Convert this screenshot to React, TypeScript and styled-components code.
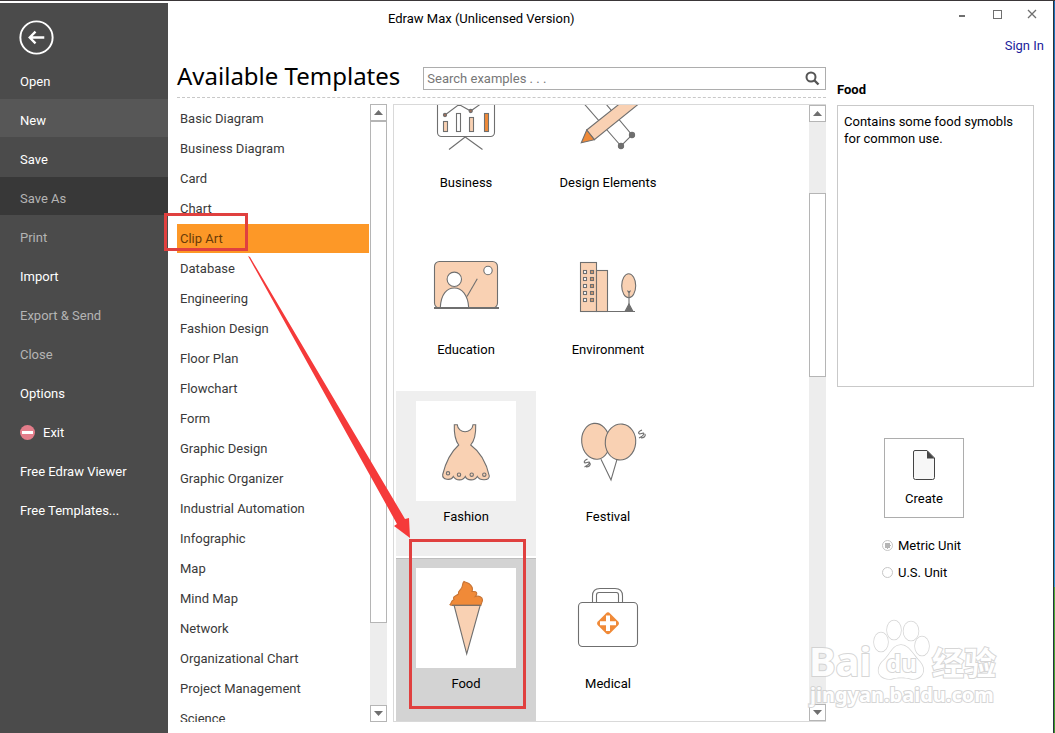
import React from "react";
import styled, { createGlobalStyle } from "styled-components";

const INK = "#6f6f6f";
const PEACH = "#f9d1b3";
const ORANGE = "#f08a38";
const MARK = "#e0403f";

const GlobalStyle = createGlobalStyle`
  *, *::before, *::after { box-sizing: border-box; }
  body { margin: 0; background: #fff; }
  body, button, input { font-family: Roboto, "Noto Sans CJK SC", sans-serif; font-size: 13px; line-height: 17px; }
  button { padding: 0; border: 0; background: none; color: inherit; text-align: inherit; cursor: pointer; }
  ul, h1, h2, p { margin: 0; padding: 0; list-style: none; }
  svg { display: block; }
`;

const Page = styled.div`
  position: relative;
  display: flex;
  height: 100vh;
  min-height: 560px;
  overflow: hidden;
  border-top: 1px solid #3a3638;
`;

const Sidebar = styled.nav`
  width: 168px;
  flex: none;
  margin-top: 2px;
  background: #4b4b4b;
`;

const BackButton = styled.button`
  display: block;
  margin: 17px 0 5px 19px;
`;

const NavItem = styled.button<{ $tone?: "active" | "dark"; $muted?: boolean }>`
  display: flex;
  align-items: center;
  gap: 8px;
  width: 100%;
  height: 38px;
  margin-bottom: 1px;
  padding: 4px 0 0 20px;
  color: ${(p) => (p.$muted ? "#b4b4b4" : "#fff")};
  background: ${(p) => (p.$tone === "active" ? "#575757" : p.$tone === "dark" ? "#383838" : "transparent")};
`;

const Main = styled.main`
  flex: 1;
  min-width: 0;
  display: flex;
  flex-direction: column;
  padding: 0 19px 11px 9px;
`;

const TitleBar = styled.header`
  display: flex;
  align-items: center;
  height: 34px;
  margin-right: -15px;
`;

const WindowTitle = styled.div`
  flex: 1;
  padding-left: 211px;
`;

const WindowButtons = styled.div`
  display: flex;
  margin-bottom: 8px;
`;

const WindowButton = styled.button`
  display: grid;
  place-items: center;
  width: 35px;
  height: 22px;
`;

const Account = styled.div`
  display: flex;
  justify-content: flex-end;
  height: 24px;
  padding-top: 2px;
  margin-right: -10px;
  a { color: #1c1c9c; text-decoration: none; }
`;

const Columns = styled.div`
  flex: 1;
  min-height: 0;
  display: flex;
  gap: 11px;
`;

const Browser = styled.section`
  flex: 1;
  min-width: 0;
  display: flex;
  flex-direction: column;
`;

const SearchRow = styled.div`
  display: flex;
  align-items: center;
  gap: 23px;
  height: 39px;
  flex: none;
  border-bottom: 1px dashed #c8c8c8;
`;

const Heading = styled.h1`
  padding-bottom: 4px;
  color: #000;
  font-family: "Noto Sans", sans-serif;
  font-size: 24px;
  line-height: 32px;
  font-weight: 400;
  white-space: nowrap;
`;

const SearchBox = styled.label`
  flex: 1;
  display: flex;
  align-items: center;
  height: 23px;
  padding: 0 5px 0 3px;
  border: 1px solid #adadad;
  input {
    flex: 1;
    min-width: 0;
    padding: 0;
    border: 0;
    outline: 0;
    background: none;
    &::placeholder { color: #777; opacity: 1; }
  }
`;

const Panels = styled.div`
  flex: 1;
  min-height: 0;
  display: flex;
  gap: 6px;
  padding-top: 6px;
`;

const CategoryPane = styled.div`
  flex: none;
  width: 210px;
  display: flex;
  gap: 1px;
`;

const CategoryList = styled.ul`
  flex: 1;
  overflow: hidden;
`;

const Category = styled.button<{ $selected: boolean }>`
  display: block;
  width: 100%;
  height: 29px;
  margin-bottom: 1px;
  padding-left: 3px;
  color: ${(p) => (p.$selected ? "#6a3b08" : "#3a3a3a")};
  background: ${(p) => (p.$selected ? "#fd9827" : "transparent")};
`;

const ScrollBar = styled.div`
  flex: none;
  display: flex;
  flex-direction: column;
  width: 17px;
  background: #ededed;
`;

const ScrollButton = styled.button`
  flex: none;
  display: grid;
  place-items: center;
  height: 17px;
  border: 1px solid #b5b5b5;
  background: #fff;
`;

const ScrollSpace = styled.div<{ $share: number }>`
  flex: ${(p) => p.$share} 0 0;
`;

const ScrollThumb = styled(ScrollSpace)`
  border: 1px solid #b5b5b5;
  background: #fff;
`;

const TemplatePane = styled.div`
  flex: 1;
  min-width: 0;
  display: flex;
  border: solid #d9d9d9;
  border-width: 1px 0 1px 1px;
`;

const TemplateViewport = styled.div`
  flex: 1;
  overflow: hidden;
  padding-left: 2px;
`;

const TemplateGrid = styled.div`
  display: grid;
  grid-template-columns: repeat(2, 140px);
  gap: 2px;
  margin-top: -48px;
`;

const Template = styled.button<{ $state?: "hover" | "selected" }>`
  display: flex;
  flex-direction: column;
  align-items: center;
  gap: 7px;
  height: 165px;
  padding-top: 10px;
  color: #000;
  background: ${(p) => (p.$state === "selected" ? "#d3d3d3" : p.$state === "hover" ? "#efefef" : "transparent")};
  box-shadow: ${(p) => (p.$state === "selected" ? "inset 0 1px #bdbdbd" : "none")};
`;

const Thumb = styled.svg`
  width: 100px;
  height: 100px;
  flex: none;
  background: #fff;
  fill: none;
  stroke: ${INK};
  stroke-width: 1.1;
`;

const Details = styled.aside`
  flex: none;
  width: 197px;
  display: flex;
  flex-direction: column;
  padding-top: 22px;
`;

const DetailTitle = styled.h2`
  font-size: 13px;
  line-height: 17px;
  color: #000;
`;

const Description = styled.p`
  height: 282px;
  flex: none;
  margin-top: 7px;
  padding: 7px 6px;
  border: 1px solid #c9c9c9;
  color: #000;
`;

const CreateButton = styled.button`
  display: flex;
  flex-direction: column;
  align-items: center;
  gap: 9px;
  width: 80px;
  height: 80px;
  flex: none;
  margin: 51px 0 19px 47px;
  padding-top: 10px;
  border: 1px solid #adadad;
  color: #000;
`;

const Units = styled.div`
  display: flex;
  flex-direction: column;
  gap: 10px;
  padding-left: 45px;
`;

const Unit = styled.label`
  display: flex;
  align-items: center;
  gap: 5px;
  color: #000;
  input {
    appearance: none;
    width: 11px;
    height: 11px;
    margin: 0;
    border: 1px solid #c6c6c6;
    border-radius: 50%;
    background: #fff;
  }
  input:checked { background: radial-gradient(circle, #b5b5b5 0 3px, #fff 3px); }
`;

const DesktopEdge = styled.div`
  flex: none;
  width: 2px;
  border-left: 1px solid #26323c;
  background: linear-gradient(#1c6fb8 0, #2f9ad6 80%, #4fae3a 80%, #3f9a2c 100%);
`;

const Highlight = styled.div<{ $x: number; $y: number; $w: number; $h: number }>`
  position: absolute;
  left: ${(p) => p.$x}px;
  top: ${(p) => p.$y}px;
  width: ${(p) => p.$w}px;
  height: ${(p) => p.$h}px;
  border: 3px solid ${MARK};
  pointer-events: none;
`;

const Arrow = styled.svg`
  position: absolute;
  left: 248px;
  top: 254px;
  pointer-events: none;
`;

const Watermark = styled.div`
  position: absolute;
  right: 56px;
  bottom: 20px;
  width: 190px;
  height: 94px;
  color: #fff;
  opacity: 0.85;
  font-family: "Noto Sans", "Noto Sans CJK SC", sans-serif;
  font-weight: 700;
  white-space: nowrap;
  pointer-events: none;
  paint-order: stroke fill;
  -webkit-text-stroke: 2px #cfcfcf;
  svg { position: absolute; left: 64px; top: 0; }
`;

const WatermarkText = styled.span<{ $x: number; $y: number; $size: number }>`
  position: absolute;
  left: ${(p) => p.$x}px;
  top: ${(p) => p.$y}px;
  font-size: ${(p) => p.$size}px;
  line-height: ${(p) => p.$size}px;
`;

const navItems: { label: string; tone?: "active" | "dark"; muted?: boolean; exit?: boolean }[] = [
  { label: "Open" },
  { label: "New", tone: "active" },
  { label: "Save" },
  { label: "Save As", tone: "dark", muted: true },
  { label: "Print", muted: true },
  { label: "Import" },
  { label: "Export & Send", muted: true },
  { label: "Close", muted: true },
  { label: "Options" },
  { label: "Exit", exit: true },
  { label: "Free Edraw Viewer" },
  { label: "Free Templates..." },
];

const categories = [
  "Basic Diagram", "Business Diagram", "Card", "Chart", "Clip Art", "Database", "Engineering",
  "Fashion Design", "Floor Plan", "Flowchart", "Form", "Graphic Design", "Graphic Organizer",
  "Industrial Automation", "Infographic", "Map", "Mind Map", "Network", "Organizational Chart",
  "Project Management", "Science",
];

const templates: { name: string; state?: "hover" | "selected"; art: React.ReactNode }[] = [
  {
    name: "Business",
    art: (
      <>
        <rect x="21.5" y="18.5" width="57" height="51" rx="4" />
        <path d="M29 48 L43 37.500 L54.700 44 L66 36" />
        <rect x="27.5" y="54.5" width="4" height="10" fill={PEACH} />
        <rect x="40.5" y="46.5" width="4" height="18" />
        <rect x="53.5" y="50.5" width="4" height="14" fill={PEACH} />
        <rect x="68.5" y="46.5" width="4" height="18" fill={ORANGE} />
        <circle cx="29" cy="48" r="1.6" fill="#a2705a" />
        <circle cx="54.7" cy="44" r="1.6" fill="#a2705a" />
        <path d="M33 82.5 L49.2 70 L66.5 82.5" />
      </>
    ),
  },
  {
    name: "Design Elements",
    art: (
      <>
        <path d="M18 27.5 L63 79 L74 68 L40 27.5" />
        <circle cx="63" cy="79" r="2.6" fill={INK} />
        <circle cx="74" cy="68" r="2.6" fill={INK} />
        <path d="M28.7 63 L72 28.5 L88 31 L36.3 72.7 Z" fill={PEACH} />
        <path d="M28.7 63 L36.3 72.7 L23.3 75.7 Z" fill={ORANGE} />
      </>
    ),
  },
  {
    name: "Education",
    art: (
      <>
        <rect x="18.5" y="27.5" width="63" height="46.5" rx="5" fill={PEACH} />
        <circle cx="72" cy="36.5" r="4.2" fill="#fff" />
        <circle cx="38.3" cy="45.3" r="7.2" fill="#fff" />
        <path d="M24.3 73.5 C25 60 31 54 38.3 54 C46 54 52 61 52.7 73.5 Z" fill="#fff" />
        <path d="M51 62.5 L61.3 44.7" />
        <path d="M18 74 H83" strokeWidth="2" />
      </>
    ),
  },
  {
    name: "Environment",
    art: (
      <>
        <rect x="22.5" y="28.5" width="16" height="49" fill={PEACH} />
        <rect x="38.5" y="36.5" width="11" height="41" fill={PEACH} />
        {[36.5, 43.5, 50.5, 57.5, 64.5].map((y) => (
          <g key={y}>
            <rect x="25.5" y={y} width="3" height="3" fill="#fff" />
            <rect x="32.5" y={y} width="3" height="3" fill="#d59a70" />
          </g>
        ))}
        <ellipse cx="70.7" cy="51.7" rx="7" ry="12" fill={PEACH} />
        <path d="M49.5 77.5 H77 M71 57 V77 M69.5 56.5 L71 59 L72.5 56.5" />
        <path d="M71 70 L75 77.5 H67 Z" fill={INK} />
      </>
    ),
  },
  {
    name: "Fashion",
    state: "hover",
    art: (
      <>
        <path
          d="M38.3 23.7 L41.3 23.7 C42 33 56 33 57 23.7 L59.7 23.7 C60 32 59 39 54.7 44 C63 50 70 60 73.3 75 C73 80 64 80 61.3 75.5 C59 80 51 80 49.3 75.5 C47 80 40 80 37.3 75.5 C35 80 26 79 26.7 73.5 C30 60 36 50 42.7 44 C39 39 38 32 38.3 23.7 Z"
          fill={PEACH}
        />
        <circle cx="32" cy="72.3" r="1.7" />
        <circle cx="43" cy="73.7" r="1.7" />
        <circle cx="55.7" cy="73.7" r="1.7" />
        <circle cx="68.3" cy="73.7" r="1.7" />
      </>
    ),
  },
  {
    name: "Festival",
    art: (
      <>
        <path d="M43 58.3 L53 79 L59 58.3" />
        <ellipse cx="37.7" cy="40.3" rx="14" ry="18" fill={PEACH} transform="rotate(-6 37.7 40.3)" />
        <ellipse cx="62.5" cy="41" rx="15.2" ry="18" fill={PEACH} transform="rotate(6 62.5 41)" />
        <path d="M84 29 C79 31 80 34 83.500 32.500 C87 31 87 34 81 37 M87 33 C88 35 86 37 83 37" />
        <path d="M29.500 58 C25 60 25.500 63 29 61.500 C33 60 32.500 63 26.500 66 M32 62 C33 64 31 66 28 66" />
      </>
    ),
  },
  {
    name: "Food",
    state: "selected",
    art: (
      <>
        <path d="M38 37 H64.3 L50.7 86 Z" fill={PEACH} />
        <path
          d="M34 36.7 C36 35 34.5 32.5 38 31.5 C36 28.5 40 28 42.5 26 C41 23 46 22 46.3 18 C46.6 16 47 14.5 48 13.5 C50 15 52.5 14 54.5 17 C56.5 19 57 21 56 23.5 C58 23.5 61 23 60.8 26 C60 27 60 28 59.5 28.5 C63 27.5 66.5 29 66.5 32 C66.5 34 65 35 65 37.3 L35 37.3 Z"
          fill={ORANGE}
          stroke="#c77435"
        />
        <path d="M36 37.3 H65" />
      </>
    ),
  },
  {
    name: "Medical",
    art: (
      <>
        <path d="M34.5 34.5 V28 C34.5 22.5 38 20.5 42 20.5 H57 C62 20.5 64.5 23 64.5 28 V34.5" />
        <path d="M38.5 34.5 V27 Q38.5 24.5 41 24.5 H58.5 Q60.5 24.5 60.5 27 V34.5" />
        <rect x="20.5" y="34.5" width="59" height="44" rx="4" />
        <rect x="41.500" y="46.800" width="17" height="17" rx="3" fill={ORANGE} stroke="none" transform="rotate(45 50 55.3)" />
        <path d="M50 47.5 V63 M42 55.3 H58" stroke="#fff" strokeWidth="4" />
      </>
    ),
  },
];

function Triangle({ down }: { down?: boolean }) {
  return (
    <svg width="9" height="5" viewBox="0 0 9 5" fill={INK}>
      <path d={down ? "M0 0 H9 L4.5 5 Z" : "M0 5 H9 L4.5 0 Z"} />
    </svg>
  );
}

function Scroller({ before, thumb, after }: { before: number; thumb: number; after: number }) {
  return (
    <ScrollBar>
      <ScrollButton aria-label="Scroll up"><Triangle /></ScrollButton>
      <ScrollSpace $share={before} />
      <ScrollThumb $share={thumb} />
      <ScrollSpace $share={after} />
      <ScrollButton aria-label="Scroll down"><Triangle down /></ScrollButton>
    </ScrollBar>
  );
}

export default function App() {
  return (
    <Page>
      <GlobalStyle />
      <Sidebar>
        <BackButton aria-label="Back">
          <svg width="35" height="35" viewBox="0 0 36 36" fill="none" stroke="#fff" strokeWidth="2">
            <circle cx="18" cy="18" r="16.6" />
            <path d="M26 18 H11 M17 12 L11 18 L17 24" strokeWidth="2.4" />
          </svg>
        </BackButton>
        {navItems.map((item) => (
          <NavItem key={item.label} $tone={item.tone} $muted={item.muted}>
            {item.exit && (
              <svg width="15" height="15" viewBox="0 0 15 15">
                <circle cx="7.5" cy="7.5" r="7.5" fill="#e37d8a" />
                <rect x="2" y="6" width="11" height="3" fill="#fff" />
              </svg>
            )}
            {item.label}
          </NavItem>
        ))}
      </Sidebar>

      <Main>
        <TitleBar>
          <WindowTitle>Edraw Max (Unlicensed Version)</WindowTitle>
          <WindowButtons>
            <WindowButton aria-label="Minimize">
              <svg width="12" height="12" stroke={INK} strokeWidth="2"><path d="M3 8 H9" /></svg>
            </WindowButton>
            <WindowButton aria-label="Maximize">
              <svg width="12" height="12" stroke={INK} fill="none"><rect x="2.5" y="2.5" width="8" height="8" /></svg>
            </WindowButton>
            <WindowButton aria-label="Close window">
              <svg width="12" height="12" stroke={INK} strokeWidth="1.3"><path d="M2 2 L10 10 M10 2 L2 10" /></svg>
            </WindowButton>
          </WindowButtons>
        </TitleBar>
        <Account><a href="#sign-in">Sign In</a></Account>

        <Columns>
          <Browser>
            <SearchRow>
              <Heading>Available Templates</Heading>
              <SearchBox>
                <input type="text" aria-label="Search examples" placeholder="Search examples . . ." />
                <svg width="15" height="15" viewBox="0 0 15 15" fill="none" stroke="#555" strokeWidth="2">
                  <circle cx="6" cy="6" r="4.5" />
                  <path d="M9 9 L13.5 13.5" strokeWidth="2.4" />
                </svg>
              </SearchBox>
            </SearchRow>
            <Panels>
              <CategoryPane>
                <CategoryList>
                  {categories.map((name) => (
                    <li key={name}><Category $selected={name === "Clip Art"}>{name}</Category></li>
                  ))}
                </CategoryList>
                <Scroller before={0} thumb={501} after={82} />
              </CategoryPane>
              <TemplatePane>
                <TemplateViewport>
                  <TemplateGrid>
                    {templates.map((t) => (
                      <Template key={t.name} $state={t.state}>
                        <Thumb viewBox="0 0 100 100" aria-hidden="true">{t.art}</Thumb>
                        {t.name}
                      </Template>
                    ))}
                  </TemplateGrid>
                </TemplateViewport>
                <Scroller before={71} thumb={183} after={328} />
              </TemplatePane>
            </Panels>
          </Browser>

          <Details>
            <DetailTitle>Food</DetailTitle>
            <Description>Contains some food symobls for common use.</Description>
            <CreateButton>
              <svg width="24" height="32" viewBox="0 0 24 32">
                <path d="M3 1.5 H15 L22.5 9 V28.5 Q22.5 30.5 20.5 30.5 H3.5 Q1.5 30.5 1.5 28.5 V3 Q1.5 1.5 3 1.5 Z" fill="#f7f7f7" stroke="#444" />
                <path d="M15 1.5 L22.5 9.5 H15 Z" fill="#444" />
              </svg>
              Create
            </CreateButton>
            <Units>
              <Unit><input type="radio" name="unit" defaultChecked />Metric Unit</Unit>
              <Unit><input type="radio" name="unit" />U.S. Unit</Unit>
            </Units>
          </Details>
        </Columns>
      </Main>
      <DesktopEdge />

      <Highlight $x={164} $y={212} $w={84} $h={38} />
      <Highlight $x={409} $y={538} $w={117} $h={170} />
      <Arrow width="164" height="284" viewBox="0 0 164 284" fill="#f53a3a">
        <path d="M0 1 L2 2 L157 264 L161 263 L162 283 L146 271 L149 269 Z" />
      </Arrow>
      <Watermark>
        <svg width="58" height="64" viewBox="0 0 58 64" fill="#fff" stroke="#cfcfcf" strokeWidth="1.500">
          <ellipse cx="8" cy="23" rx="7" ry="9.5" />
          <ellipse cx="21" cy="11" rx="7" ry="9.500" />
          <ellipse cx="38" cy="12" rx="7.500" ry="9.500" />
          <ellipse cx="49" cy="27" rx="7" ry="9.500" />
          <path d="M28 26 C36 26 40 36 47 43 C54 52 49 60 39 60 C31 58 25 58 18 60 C6 60 2 52 9 43 C17 37 19 26 28 26 Z" />
        </svg>
        <WatermarkText $x={0} $y={22} $size={40}>Bai</WatermarkText>
        <WatermarkText $x={77} $y={32} $size={24}>du</WatermarkText>
        <WatermarkText $x={123} $y={28} $size={32}>经验</WatermarkText>
        <WatermarkText $x={1} $y={66} $size={20}>jingyan.baidu.com</WatermarkText>
      </Watermark>
    </Page>
  );
}
